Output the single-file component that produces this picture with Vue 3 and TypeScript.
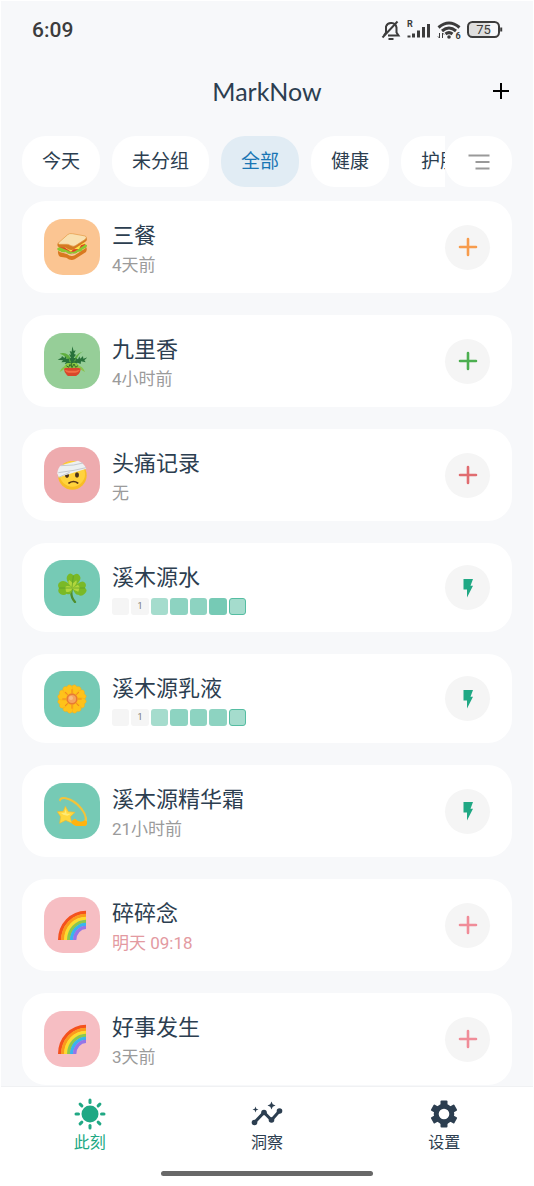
<script setup lang="ts">
import { ref } from 'vue'

type Art = 'sandwich' | 'plant' | 'bandage' | 'clover' | 'flower' | 'dizzy' | 'rainbow'

interface Streak {
  level: number
  label?: string
  today?: boolean
}

interface Item {
  id: number
  name: string
  art: Art
  tone: string
  note?: string
  due?: boolean
  streak?: Streak[]
  quick?: boolean
}

const groups = ['今天', '未分组', '全部', '健康', '护肤']
const activeGroup = ref('全部')

const items: Item[] = [
  { id: 1, name: '三餐', art: 'sandwich', tone: 'orange', note: '4天前' },
  { id: 2, name: '九里香', art: 'plant', tone: 'green', note: '4小时前' },
  { id: 3, name: '头痛记录', art: 'bandage', tone: 'red', note: '无' },
  {
    id: 4,
    name: '溪木源水',
    art: 'clover',
    tone: 'teal',
    quick: true,
    streak: [{ level: 0 }, { level: 0, label: '1' }, { level: 1 }, { level: 2 }, { level: 2 }, { level: 3 }, { level: 1, today: true }],
  },
  {
    id: 5,
    name: '溪木源乳液',
    art: 'flower',
    tone: 'teal',
    quick: true,
    streak: [{ level: 0 }, { level: 0, label: '1' }, { level: 1 }, { level: 2 }, { level: 2 }, { level: 2 }, { level: 1, today: true }],
  },
  { id: 6, name: '溪木源精华霜', art: 'dizzy', tone: 'teal', note: '21小时前', quick: true },
  { id: 7, name: '碎碎念', art: 'rainbow', tone: 'pink', note: '明天 09:18', due: true },
  { id: 8, name: '好事发生', art: 'rainbow', tone: 'pink', note: '3天前' },
]

const tabs = [
  { id: 'now', label: '此刻' },
  { id: 'insight', label: '洞察' },
  { id: 'settings', label: '设置' },
]
const activeTab = ref('now')

const petals = [0, 45, 90, 135, 180, 225, 270, 315]
const rays = [0, 45, 90, 135, 180, 225, 270, 315]
const teeth = [0, 60, 120, 180, 240, 300]
const bows = [
  { r: 79, c: '#f4511e' },
  { r: 70, c: '#fb9a1c' },
  { r: 61, c: '#fddb2e' },
  { r: 52, c: '#8cc84b' },
  { r: 43, c: '#38b4ee' },
  { r: 34, c: '#9575e8' },
]
</script>

<template>
  <div class="app">
    <div class="status">
      <time class="clock">6:09</time>
      <div class="indicators">
        <svg class="bell" viewBox="0 0 20 22" aria-hidden="true">
          <path d="M7 16.5H17.5L15.5 13.5V8.5A5.5 5.5 0 0 0 5 7.5V13.5L3 16.5" />
          <path d="M1.5 18.5L16.5 2.5" />
          <path d="M7.5 20H12.5" />
        </svg>
        <svg class="signal" viewBox="0 0 24 20" aria-hidden="true">
          <text x="0" y="7">R</text>
          <path d="M2 15.5V17.5M6.5 13.5V17.5M11.5 10.5V17.5M16.5 7V17.5M21.5 4V17.5" />
        </svg>
        <svg class="wifi" viewBox="0 0 24 20" aria-hidden="true">
          <path d="M1.5 7.5Q12 -1.5 22.5 7.5M5 11Q12 5 19 11M8.5 14Q12 11.2 15.5 14" />
          <circle cx="12" cy="17" r="1.8" />
          <path class="thin" d="M2.5 13V18M1 16.5L2.5 18M5.5 18V13M7 14.5L5.5 13" />
          <text x="18.5" y="19">6</text>
        </svg>
        <svg class="battery" viewBox="0 0 36 18" aria-hidden="true">
          <rect class="charge" x="2" y="2" width="21" height="14" rx="3" />
          <rect class="shell" x="1" y="1" width="31" height="15" rx="4.5" />
          <path d="M34.2 6.5V10.5" />
          <text x="16.5" y="13">75</text>
        </svg>
      </div>
    </div>

    <header class="header">
      <h1>MarkNow</h1>
      <button class="add" type="button" aria-label="添加">
        <svg viewBox="0 0 18 18"><path d="M9 1V17M1 9H17" /></svg>
      </button>
    </header>

    <div class="filters">
      <div class="chips">
        <button
          v-for="group in groups"
          :key="group"
          type="button"
          class="chip"
          :class="{ active: group === activeGroup }"
          @click="activeGroup = group"
        >{{ group }}</button>
      </div>
      <button class="menu" type="button" aria-label="分组列表">
        <svg viewBox="0 0 22 16"><path d="M0.5 1.5H21.5M7.5 8H21.5M7.5 14.5H21.5" /></svg>
      </button>
    </div>

    <main class="list">
      <article v-for="item in items" :key="item.id" class="card" :class="item.tone">
        <div class="tile">
          <svg viewBox="0 0 90 90" aria-hidden="true">
            <g v-if="item.art === 'sandwich'">
              <path fill="#d9791f" d="M3 58Q2 70 9 74L28 77Q40 87 53 82L87 60Q91 52 88 46L45 48Z" />
              <path fill="#f7d59c" d="M5 59L30 66Q42 76 53 70L86 48L40 42Z" />
              <path fill="#f0a48e" d="M5 56Q20 61 31 64Q42 72 54 65L87 44L45 40Z" />
              <path fill="#8cc62f" d="M1 49Q0 57 9 57Q17 64 26 59Q35 69 46 64Q57 67 63 59Q75 60 77 52Q89 49 91 40L80 34L40 45L8 45Z" />
              <path fill="#e03d25" d="M7 45L34 56Q45 63 56 56L84 38L80 30L40 40Z" />
              <path fill="#ffe14a" d="M22 46L42 59L49 52L66 51L72 40L85 35L80 27L40 38Z" />
              <path fill="#d47a22" d="M3 32Q-2 43 7 46L27 47Q40 58 52 51L88 27Q92 18 85 13Z" />
              <path fill="#f9e0b0" stroke="#e49842" stroke-width="2" d="M6 31L32 8Q38 3 46 5L85 12Q91 16 85 22L57 40Q51 45 42 41Q34 35 24 37L7 37Q2 35 6 31Z" />
            </g>
            <g v-else-if="item.art === 'plant'">
              <path fill="#8bc34a" d="M45 66Q20 50 8 78Q19 73 28 62ZM45 66Q72 48 84 78Q70 72 62 61Z" />
              <path fill="#5fae3e" d="M45 62Q28 27 8 23Q22 17 35 28Q46 40 45 62Q48 24 80 16Q65 23 60 36Q54 48 45 62Z" />
              <path fill="#28713a" d="M45 64L35 52L23 54L27 48L13 49L18 43L2 41L13 35L15 30L22 36L26 31L29 39L36 38L37 47L43 50L37 37L42 36L36 25L42 26L38 15L44 17L46 1L50 15L56 13L51 24L57 26L50 35L56 37L49 49L56 43L56 36L63 40L67 31L70 38L78 30L79 38L91 34L82 43L86 49L72 46L71 54L62 50L57 56L50 56Z" />
              <path fill="#8cc943" d="M22 63Q26 47 42 52Q60 45 69 63L60 72H31Z" />
              <path stroke="#326c28" stroke-width="3" fill="none" d="M28 59L35 64L39 55L45 65L51 54L56 64L63 59M44 50V62" />
              <path fill="#d9472b" d="M21 68Q25 63 46 66Q66 63 71 68Q70 82 60 88Q56 93 45 93Q35 93 30 88Q21 80 21 68Z" />
              <path fill="#f37045" d="M23 71Q45 78 69 71Q64 80 55 80H35Q26 79 23 71Z" />
            </g>
            <g v-else-if="item.art === 'bandage'">
              <circle cx="46" cy="46" r="43" fill="#f8bd25" />
              <circle cx="46" cy="42" r="38" fill="#ffd33d" />
              <ellipse cx="30" cy="46" rx="6" ry="8" fill="#4a331b" />
              <ellipse cx="60" cy="45" rx="6" ry="8" fill="#4a331b" />
              <path fill="none" stroke="#5b3818" stroke-width="5" stroke-linecap="round" d="M36 69Q50 60 62 69" />
              <path fill="#edf0f2" d="M1 40Q3 22 13 16L63 2Q80 8 88 26L5 52Z" />
              <path fill="none" stroke="#c4c9ce" stroke-width="3" d="M4 38L51 31L87 23M12 17L50 15L78 9M5 52L38 37" />
            </g>
            <g v-else-if="item.art === 'clover'">
              <path fill="none" stroke="#4f8d2b" stroke-width="7" stroke-linecap="round" d="M45 45Q38 69 54 87" />
              <path fill="#7ab927" d="M45 45Q22 20 32 7Q39 -4 49 7Q61 -3 68 8Q78 21 48 45Q76 15 85 31Q89 37 84 44Q94 53 83 62Q73 73 64 65Q54 66 47 47Q43 69 29 62Q21 70 10 63Q0 56 6 46Q-1 33 9 27Q26 16 45 45Z" />
              <path fill="#b1d63d" d="M45 43Q28 29 37 21L48 31L58 22Q63 31 48 44L63 35L68 43L64 56Q51 54 46 46Q40 61 27 56L25 42Q30 35 45 43Z" />
              <path fill="none" stroke="#579a27" stroke-width="2" d="M45 44L49 8M45 45L7 45M46 45L84 45" />
            </g>
            <g v-else-if="item.art === 'flower'">
              <path
                v-for="angle in petals"
                :key="angle"
                fill="#ffc21a"
                stroke="#f5a914"
                stroke-width="1"
                d="M38 36Q28 16 31 7Q36 -2 45 5Q54 -2 59 7Q62 16 52 36Z"
                :transform="`rotate(${angle + 22} 45 45)`"
              />
              <path
                v-for="angle in petals"
                :key="`v${angle}`"
                stroke="#f08322"
                stroke-width="3"
                d="M45 27V16"
                :transform="`rotate(${angle} 45 45)`"
              />
              <circle cx="45" cy="45" r="17" fill="#e97b33" />
              <circle cx="45" cy="45" r="12" fill="#f4a460" />
              <circle cx="42" cy="42" r="6" fill="#f9bd85" />
            </g>
            <g v-else-if="item.art === 'dizzy'">
              <path fill="#f4c33a" d="M6 13Q8 0 27 4Q56 10 76 37Q91 56 91 77Q91 93 72 93Q51 92 41 78L54 68Q69 84 81 76Q89 62 69 38Q48 14 23 9Q12 8 10 17Z" />
              <path fill="#ffb30f" d="M41 78L54 68Q69 84 83 73L91 77Q91 93 72 93Q51 92 41 78Z" />
              <path fill="#ffd83d" stroke="#f5b92d" stroke-width="2" stroke-linejoin="round" d="M25 31L34 47L54 49L40 62L44 81L26 73L8 82L11 62L1 47L19 46Z" />
              <path fill="#ffea75" d="M26 40L29 53L42 53L31 59L19 56L12 51L23 50Z" />
            </g>
            <g v-else>
              <path
                v-for="bow in bows"
                :key="bow.r"
                fill="none"
                :stroke="bow.c"
                stroke-width="10"
                :d="`M${87 - bow.r} 90A${bow.r} ${bow.r + 4} 0 0 1 87 ${86 - bow.r}`"
              />
            </g>
          </svg>
        </div>

        <div class="body">
          <h2>{{ item.name }}</h2>
          <div v-if="item.streak" class="streak">
            <span
              v-for="(day, index) in item.streak"
              :key="index"
              class="day"
              :class="[`level-${day.level}`, { today: day.today }]"
            >{{ day.label }}</span>
          </div>
          <p v-else :class="{ due: item.due }">{{ item.note }}</p>
        </div>

        <button class="record" type="button" :aria-label="`记录 ${item.name}`">
          <svg v-if="item.quick" viewBox="0 0 20 20"><path class="bolt" d="M5.5 1H15L12.5 7.8H15L9 19.5V11.5H5.5Z" /></svg>
          <svg v-else viewBox="0 0 20 20"><path class="plus" d="M10 2V18M2 10H18" /></svg>
        </button>
      </article>
    </main>

    <footer class="footer">
      <nav class="tabs">
        <button
          v-for="tab in tabs"
          :key="tab.id"
          type="button"
          class="tab"
          :class="{ active: tab.id === activeTab }"
          @click="activeTab = tab.id"
        >
          <svg v-if="tab.id === 'now'" viewBox="0 0 32 32">
            <circle cx="16" cy="16" r="8.5" fill="currentColor" />
            <path
              v-for="angle in rays"
              :key="angle"
              class="ray"
              d="M16 2V4.5"
              :transform="`rotate(${angle} 16 16)`"
            />
          </svg>
          <svg v-else-if="tab.id === 'insight'" viewBox="0 0 32 32">
            <path class="trend" d="M3.5 24.5L13 14.5L20.5 22L28.5 13" />
            <g fill="currentColor">
              <circle cx="3.5" cy="24.5" r="2.8" />
              <circle cx="13" cy="14.5" r="2.8" />
              <circle cx="20.5" cy="22" r="2.8" />
              <circle cx="28.5" cy="13" r="2.8" />
              <path d="M20.5 3.5L21.7 6.3L24.5 7.5L21.7 8.7L20.5 11.5L19.3 8.7L16.5 7.5L19.3 6.3ZM4.5 8.5L5.3 10.7L7.5 11.5L5.3 12.3L4.5 14.5L3.7 12.3L1.5 11.5L3.7 10.7Z" />
            </g>
          </svg>
          <svg v-else viewBox="0 0 32 32">
            <rect
              v-for="angle in teeth"
              :key="angle"
              x="12.5"
              y="2.5"
              width="7"
              height="7"
              rx="1"
              fill="currentColor"
              :transform="`rotate(${angle} 16 16)`"
            />
            <circle class="gear" cx="16" cy="16" r="7.8" />
          </svg>
          <span>{{ tab.label }}</span>
        </button>
      </nav>
      <div class="home-bar"></div>
    </footer>
  </div>
</template>

<style>
body {
  margin: 0;
  background: #f7f8fa;
}
</style>

<style scoped>
.app {
  display: flex;
  flex-direction: column;
  box-sizing: border-box;
  height: 100vh;
  border: 1px solid #fff;
  background: #f7f8fa;
  color: #2c3e50;
  font-family: Roboto, "Noto Sans CJK SC", sans-serif;
}

button {
  margin: 0;
  padding: 0;
  border: 0;
  background: none;
  color: inherit;
  font: inherit;
  cursor: pointer;
}

svg {
  display: block;
  fill: none;
}

.status {
  display: flex;
  flex: none;
  align-items: center;
  justify-content: space-between;
  height: 58px;
  padding: 0 30px 0 31px;
  color: #3c3c3c;
}

.clock {
  font-size: 21px;
  font-weight: 500;
}

.indicators {
  display: flex;
  align-items: center;
  gap: 6px;
  stroke: #3c3c3c;
}

.indicators text {
  fill: #3c3c3c;
  stroke: none;
  font-size: 9px;
  font-weight: 700;
}

.bell {
  width: 20px;
  height: 22px;
  stroke-width: 2;
}

.signal {
  width: 24px;
  height: 20px;
  stroke-width: 3;
}

.wifi {
  width: 24px;
  height: 20px;
  stroke-width: 3;
}

.wifi circle {
  fill: #3c3c3c;
  stroke: none;
}

.wifi .thin {
  stroke-width: 1;
}

.battery {
  width: 36px;
  height: 18px;
  stroke-width: 2;
}

.battery .charge {
  fill: #dedede;
  stroke: none;
}

.battery text {
  font-size: 13px;
  font-weight: 400;
  text-anchor: middle;
}

.header {
  display: grid;
  flex: none;
  grid-template-columns: 1fr auto 1fr;
  align-items: center;
  height: 63px;
  padding: 0 23px;
}

h1 {
  grid-column: 2;
  margin: 0;
  font-family: Lato, sans-serif;
  font-size: 25px;
  font-weight: 400;
  line-height: 32px;
}

.add {
  justify-self: end;
  stroke: #000;
  stroke-width: 2;
}

.add svg {
  width: 18px;
  height: 18px;
}

.filters {
  display: flex;
  flex: none;
  align-items: center;
  margin: 14px 21px;
}

.chips {
  display: flex;
  flex: 1;
  gap: 12px;
  min-width: 0;
  overflow: hidden;
}

.chip {
  flex: none;
  height: 51px;
  padding: 0 20px;
  border-radius: 24px;
  background: #fff;
  font-size: 19px;
  line-height: 51px;
}

.chip.active {
  background: #e1ecf4;
  color: #1a76b4;
}

.menu {
  display: flex;
  flex: none;
  align-items: center;
  justify-content: center;
  width: 67px;
  height: 51px;
  border-radius: 24px;
  background: #fff;
  stroke: #999;
  stroke-width: 2;
}

.menu svg {
  width: 22px;
  height: 16px;
}

.list {
  display: flex;
  flex: 1;
  flex-direction: column;
  gap: 22px;
  min-height: 0;
  padding: 0 21px;
  overflow: hidden;
}

.card {
  display: flex;
  flex: none;
  align-items: center;
  gap: 12px;
  padding: 17px 22px;
  border-radius: 24px;
  background: #fff;
}

.tile {
  display: flex;
  flex: none;
  align-items: center;
  justify-content: center;
  width: 56px;
  height: 56px;
  margin: -1px 0;
  border-radius: 19px;
}

.tile svg {
  width: 30px;
  height: 30px;
}

.orange .tile { background: #fbc592; }
.green .tile { background: #96ce98; }
.red .tile { background: #eeabae; }
.teal .tile { background: #76cab5; }
.pink .tile { background: #f6bec3; }

.orange .record { color: #f79c4d; }
.green .record { color: #4caf50; }
.red .record { color: #e06c70; }
.teal .record { color: #20a884; }
.pink .record { color: #f08c98; }

.body {
  flex: 1;
  min-width: 0;
}

h2 {
  margin: 0;
  font-size: 22px;
  font-weight: 400;
  line-height: 36px;
}

p {
  margin: 0;
  color: #9b9b9b;
  font-size: 17px;
  line-height: 22px;
}

p.due {
  color: #e39aa1;
}

.streak {
  display: grid;
  grid-template-columns: repeat(7, 1fr);
  gap: 2px;
  width: 134px;
  margin-top: 2px;
}

.day {
  box-sizing: border-box;
  height: 17px;
  border-radius: 3px;
  color: #777;
  font-size: 9px;
  line-height: 17px;
  text-align: center;
}

.level-0 { background: #f5f5f5; }
.level-1 { background: #a5dccd; }
.level-2 { background: #8dd3c1; }
.level-3 { background: #76cab5; }

.today {
  border: 1px solid #55bda2;
}

.record {
  display: flex;
  flex: none;
  align-items: center;
  justify-content: center;
  width: 45px;
  height: 45px;
  border-radius: 50%;
  background: #f5f5f5;
}

.record svg {
  width: 20px;
  height: 20px;
}

.plus {
  stroke: currentColor;
  stroke-width: 2.6;
  stroke-linecap: round;
}

.bolt {
  fill: currentColor;
}

.footer {
  flex: none;
  border-top: 1px solid #f0f1f3;
  background: #fff;
}

.tabs {
  display: grid;
  grid-template-columns: repeat(3, 1fr);
  padding-top: 11px;
}

.tab {
  display: flex;
  flex-direction: column;
  align-items: center;
  font-size: 16px;
  line-height: 26px;
}

.tab.active {
  color: #20a884;
}

.tab svg {
  width: 32px;
  height: 32px;
}

.ray {
  stroke: currentColor;
  stroke-width: 3;
  stroke-linecap: round;
}

.trend {
  stroke: currentColor;
  stroke-width: 3;
}

.gear {
  stroke: currentColor;
  stroke-width: 5;
}

.home-bar {
  width: 40%;
  height: 5px;
  margin: 15px auto 9px;
  border-radius: 3px;
  background: #686868;
}
</style>
